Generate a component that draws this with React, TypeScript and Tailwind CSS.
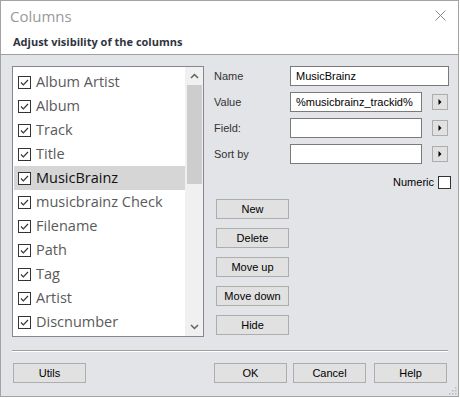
import React from "react";

const items = [
  "Album Artist",
  "Album",
  "Track",
  "Title",
  "MusicBrainz",
  "musicbrainz Check",
  "Filename",
  "Path",
  "Tag",
  "Artist",
  "Discnumber",
];

function Check() {
  return (
    <div className="w-[13px] h-[13px] border border-[#333333] bg-white flex items-center justify-center shrink-0">
      <svg width="11" height="11" viewBox="0 0 11 11">
        <path d="M2 5.5 L4.3 7.8 L9 3" fill="none" stroke="#333" strokeWidth="1.2" />
      </svg>
    </div>
  );
}

function Btn({ label, w = "w-[73px]" }: { label: string; w?: string }) {
  return (
    <div
      className={`${w} h-[20px] border border-[#adadad] bg-[#e1e1e1] flex items-center justify-center text-[11px] text-black`}
    >
      {label}
    </div>
  );
}

function Arrow() {
  return (
    <div className="w-[16px] h-[16px] border border-[#adadad] bg-[#e1e1e1] flex items-center justify-center">
      <svg width="6" height="8" viewBox="0 0 6 8">
        <path d="M1.5 1 L4.5 4 L1.5 7 Z" fill="#000" />
      </svg>
    </div>
  );
}

export default function App() {
  return (
    <div
      className="w-[460px] h-[398px] bg-white overflow-hidden"
      style={{ fontFamily: '"Liberation Sans", Arial, sans-serif' }}
    >
      <div className="w-[459px] h-[397px] border border-[#a3a3a3] flex flex-col">
        {/* title bar */}
        <div className="h-[29px] bg-white flex items-center justify-between pl-[9px] pr-[12px]">
          <span
            className="text-[15px] text-[#999999] mt-[2px]"
            style={{ fontFamily: '"Open Sans", sans-serif' }}
          >
            Columns
          </span>
          <svg width="11" height="11" viewBox="0 0 11 11">
            <path d="M0.5 0.5 L10.5 10.5 M10.5 0.5 L0.5 10.5" stroke="#8a8a8a" strokeWidth="1" />
          </svg>
        </div>
        {/* header */}
        <div className="h-[25px] bg-white border-b border-[#a0a0a0] flex items-center pl-[12px]">
          <span
            className="text-[11px] font-bold text-[#2f3440]"
            style={{ fontFamily: '"Open Sans", sans-serif' }}
          >
            Adjust visibility of the columns
          </span>
        </div>
        {/* body */}
        <div className="flex-1 bg-[#e2e4e7] flex flex-col">
          <div className="flex pt-[11px] pl-[11px]">
            {/* list */}
            <div className="w-[192px] h-[271px] border border-[#828790] bg-white flex">
              <div className="flex-1 pt-[3px] pl-[1px] flex flex-col">
                {items.map((it, i) => {
                  const sel = it === "MusicBrainz";
                  return (
                    <div
                      key={it}
                      className={`h-[24px] flex items-center gap-[5px] pl-[4px] ${sel ? "bg-[#d6d6d6]" : ""}`}
                    >
                      <Check />
                      <span
                        className={`text-[14.5px] ${sel ? "text-[#111111]" : "text-[#5a5a5a]"}`}
                        style={{ fontFamily: '"Open Sans", sans-serif' }}
                      >
                        {it}
                      </span>
                    </div>
                  );
                })}
              </div>
              <div className="w-[18px] bg-[#f0f0f0] flex flex-col items-center">
                <div className="h-[18px] flex items-center justify-center">
                  <svg width="9" height="6" viewBox="0 0 9 6">
                    <path d="M1 5 L4.5 1.5 L8 5" fill="none" stroke="#606060" strokeWidth="1.5" />
                  </svg>
                </div>
                <div className="w-[15px] h-[99px] bg-[#cdcdcd]" />
                <div className="flex-1" />
                <div className="h-[18px] flex items-center justify-center">
                  <svg width="9" height="6" viewBox="0 0 9 6">
                    <path d="M1 1 L4.5 4.5 L8 1" fill="none" stroke="#606060" strokeWidth="1.5" />
                  </svg>
                </div>
              </div>
            </div>
            {/* right panel */}
            <div className="ml-[10px] flex flex-col text-[11px] text-[#333333]">
              <div className="flex items-center h-[20px]">
                <span className="w-[76px]">Name</span>
                <div className="w-[159px] h-[20px] border border-[#7a7a7a] bg-white flex items-center px-[5px] text-black">
                  MusicBrainz
                </div>
              </div>
              <div className="flex items-center h-[20px] mt-[6px]">
                <span className="w-[76px]">Value</span>
                <div className="w-[132px] h-[20px] border border-[#7a7a7a] bg-white flex items-center px-[5px] text-black whitespace-nowrap overflow-hidden">
                  %musicbrainz_trackid%
                </div>
                <div className="ml-[10px]">
                  <Arrow />
                </div>
              </div>
              <div className="flex items-center h-[20px] mt-[6px]">
                <span className="w-[76px]">Field:</span>
                <div className="w-[132px] h-[20px] border border-[#7a7a7a] bg-white" />
                <div className="ml-[10px]">
                  <Arrow />
                </div>
              </div>
              <div className="flex items-center h-[20px] mt-[6px]">
                <span className="w-[76px]">Sort by</span>
                <div className="w-[132px] h-[20px] border border-[#7a7a7a] bg-white" />
                <div className="ml-[10px]">
                  <Arrow />
                </div>
              </div>
              <div className="flex items-center justify-end h-[14px] mt-[11px] gap-[4px] w-[237px] text-black">
                <span>Numeric</span>
                <div className="w-[13px] h-[13px] border border-[#333333] bg-white" />
              </div>
              <div className="flex flex-col gap-[9px] mt-[10px] ml-[2px]">
                <Btn label="New" />
                <Btn label="Delete" />
                <Btn label="Move up" />
                <Btn label="Move down" />
                <Btn label="Hide" />
              </div>
            </div>
          </div>
          {/* separator */}
          <div className="ml-[11px] mt-[13px] w-[436px] border-t border-[#a0a0a0] border-b border-b-white" />
          {/* bottom buttons */}
          <div className="flex mt-[11px] pl-[12px]">
            <Btn label="Utils" />
            <div className="ml-[128px] flex">
              <Btn label="OK" />
              <div className="ml-[6px]">
                <Btn label="Cancel" />
              </div>
              <div className="ml-[8px]">
                <Btn label="Help" />
              </div>
            </div>
          </div>
          <div className="flex-1 flex justify-end items-end pr-[1px] pb-[1px]">
            <svg width="8" height="8" viewBox="0 0 8 8">
              <rect x="6" y="0" width="1.5" height="1.5" fill="#b8b8b8" />
              <rect x="3" y="3" width="1.5" height="1.5" fill="#b8b8b8" />
              <rect x="6" y="3" width="1.5" height="1.5" fill="#b8b8b8" />
              <rect x="0" y="6" width="1.5" height="1.5" fill="#b8b8b8" />
              <rect x="3" y="6" width="1.5" height="1.5" fill="#b8b8b8" />
              <rect x="6" y="6" width="1.5" height="1.5" fill="#b8b8b8" />
            </svg>
          </div>
        </div>
      </div>
    </div>
  );
}
